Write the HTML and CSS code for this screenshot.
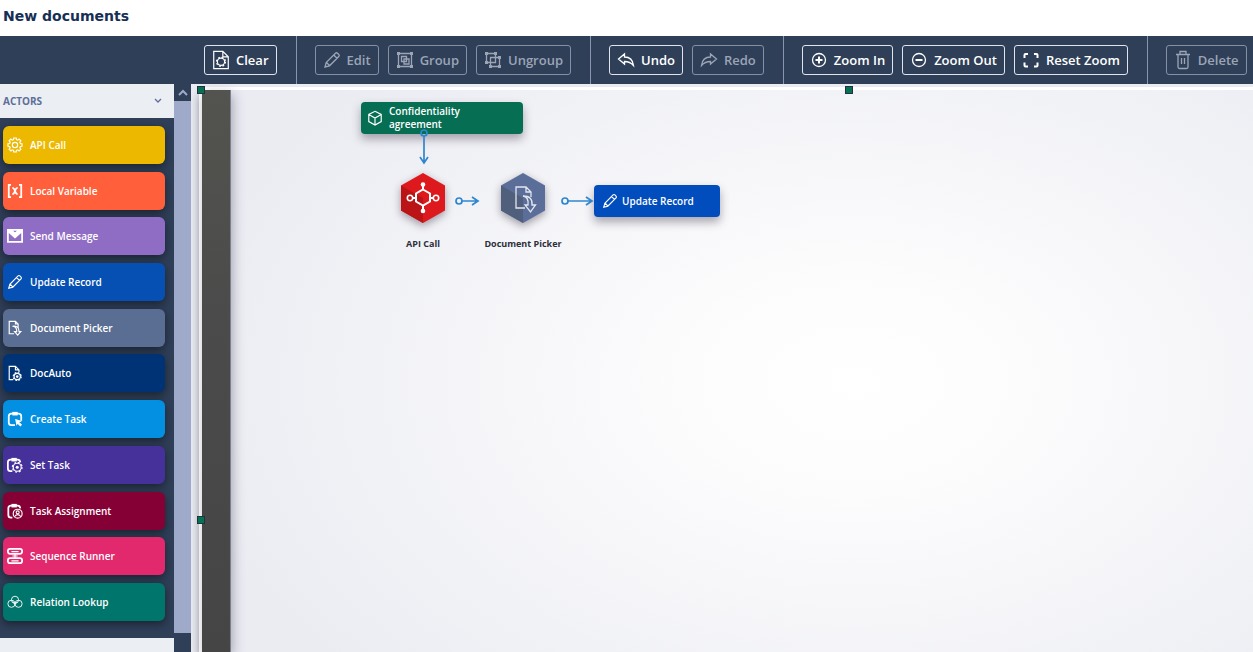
FILE: index.html
```html
<!DOCTYPE html>
<html lang="en">
<head>
    <meta charset="UTF-8">
    <meta name="viewport" content="width=device-width, initial-scale=1.0">
    <title>New documents</title>
    <link rel="stylesheet" href="styles.css">
</head>
<body>
<!-- Icons used more than once -->
<svg class="symbols" aria-hidden="true">
    <symbol id="pencil" viewBox="0 0 18 18">
        <path d="M2 16l1.200-4.500L12.500 2.200q1-1 2 0l1.300 1.300q1 1 0 2L6.500 14.800zM10.800 4l3.200 3.200M3.500 11.500l3 3"/>
    </symbol>
    <symbol id="doc-arrow" viewBox="0 0 18 18">
        <path d="M8 15.500H2.500v-14h7l3 3V9M9.500 1.500v3h3M6 7q5 0 5 6H8.500l3.500 4 3.500-4H13.500Q13.500 6 6 7"/>
    </symbol>
</svg>

<header class="title">
    <h1>New documents</h1>
</header>

<nav class="toolbar">
    <div class="group">
        <button class="tool">
            <svg viewBox="0 0 18 22"><path d="M1 1.500h10l6 6V20.500H1zM11 1.500v6h6"/><circle cx="9" cy="13" r="4"/><circle cx="9" cy="13" r="5" stroke-dasharray="2 1.930"/></svg>
            Clear
        </button>
    </div>
    <div class="group">
        <button class="tool" disabled>
            <svg viewBox="0 0 18 18"><use href="#pencil"/></svg>
            Edit
        </button>
        <button class="tool" disabled>
            <svg viewBox="0 0 18 18"><path d="M2.500 2.500h13v13h-13zM5.500 5.500h5v5h-5zM8 8h5v5H8z"/><path class="dots" d="M1 1h3v3H1zM14 1h3v3h-3zM1 14h3v3H1zM14 14h3v3h-3z"/></svg>
            Group
        </button>
        <button class="tool" disabled>
            <svg viewBox="0 0 18 18"><path d="M2.500 2.500h9v9h-9zM6.500 6.500h9v9h-9z"/><path class="dots" d="M1 1h3v3H1zM10 1h3v3h-3zM1 10h3v3H1zM14 5h3v3h-3zM5 14h3v3H5zM14 14h3v3h-3z"/></svg>
            Ungroup
        </button>
    </div>
    <div class="group">
        <button class="tool">
            <svg viewBox="0 0 18 18"><path d="M1.500 8l6-5v3q8 0 9 8.500Q13 10.500 7.500 10.500V13z"/></svg>
            Undo
        </button>
        <button class="tool" disabled>
            <svg viewBox="0 0 18 18"><path d="M16.500 8l-6-5v3q-8 0-9 8.500Q5 10.500 10.500 10.500V13z"/></svg>
            Redo
        </button>
    </div>
    <div class="group">
        <button class="tool">
            <svg viewBox="0 0 18 18"><circle cx="9" cy="9" r="6.500"/><path class="thick" d="M5.500 9h7M9 5.500v7"/></svg>
            Zoom In
        </button>
        <button class="tool">
            <svg viewBox="0 0 18 18"><circle cx="9" cy="9" r="6.500"/><path class="thick" d="M5.500 9h7"/></svg>
            Zoom Out
        </button>
        <button class="tool">
            <svg viewBox="0 0 18 18"><path class="thick" d="M2.500 7V4q0-1 1-1H6M12 3h2.500q1 0 1 1v3M15.500 11.500v3q0 1-1 1H12M6 15.500H3.500q-1 0-1-1v-3"/></svg>
            Reset Zoom
        </button>
    </div>
    <div class="group">
        <button class="tool" disabled>
            <svg viewBox="0 0 18 20"><path d="M2 4.500h14M6 4.500v-3h6v3M4 4.500V17q0 1.500 1.500 1.500h7q1.500 0 1.500-1.500V4.500M7.500 8v6M10.500 8v6"/></svg>
            Delete
        </button>
    </div>
</nav>

<main class="workspace">
    <aside class="sidebar">
        <button class="section">
            ACTORS
            <svg viewBox="0 0 8 6"><path d="M1 1l3 3 3-3"/></svg>
        </button>
        <div class="actors">
            <button class="actor api">
                <svg viewBox="0 0 18 18"><circle cx="9" cy="9" r="3"/><path d="M15 7.400L16.900 7.600V10.400L15 10.600L14.400 12.100L15.600 13.600L13.600 15.600L12.100 14.400L10.600 15L10.400 16.900H7.600L7.400 15L5.900 14.400L4.400 15.600L2.400 13.600L3.600 12.100L3 10.600L1.100 10.400V7.600L3 7.400L3.600 5.900L2.400 4.400L4.400 2.400L5.900 3.600L7.400 3L7.600 1.100H10.400L10.600 3L12.100 3.600L13.600 2.400L15.600 4.400L14.400 5.900z"/></svg>
                API Call
            </button>
            <button class="actor variable">
                <svg viewBox="0 0 18 18"><path class="thick" d="M4.500 2H2v14h2.500M13.500 2H16v14h-2.500M6 5.500q2 0 3 3.500t3 3.500M12 5.500q-2 0-3 3.500t-3 3.500"/></svg>
                Local Variable
            </button>
            <button class="actor message">
                <svg viewBox="0 0 18 18"><path class="thick" d="M1 2h16v13.500H1z"/><path class="solid" d="M1 2h4l4 4 4-4h4v2l-8 7-8-7z"/></svg>
                Send Message
            </button>
            <button class="actor record">
                <svg viewBox="0 0 18 18"><use href="#pencil"/></svg>
                Update Record
            </button>
            <button class="actor picker">
                <svg viewBox="0 0 18 18"><use href="#doc-arrow"/></svg>
                Document Picker
            </button>
            <button class="actor docauto">
                <svg viewBox="0 0 18 18"><path d="M7 16.500H2.500v-15h7l4 4V8M9.500 1.500v4h4"/><circle cx="11.500" cy="13" r="3.500"/><circle cx="11.500" cy="13" r="4.500" stroke-dasharray="2 1.530"/><circle class="dots" cx="11.500" cy="13" r="1.500"/></svg>
                DocAuto
            </button>
            <button class="actor create">
                <svg viewBox="0 0 18 18"><path class="thick" d="M9 16H5q-3 0-3-3V6q0-3 3-3h8q3 0 3 3v5"/><path class="dots" d="M6 1h6v4H6z"/><path class="solid" d="M10 10l5 1.500-2 1 3 3-1 1-3-3-1 1.500z"/></svg>
                Create Task
            </button>
            <button class="actor set">
                <svg viewBox="0 0 18 18"><path class="thick" d="M6 16H4q-3 0-3-3V6q0-3 3-3h8q2.500 0 3 3"/><path class="dots" d="M5 1h6v4H5z"/><circle cx="11.500" cy="11.500" r="4.500"/><circle cx="11.500" cy="11.500" r="5.500" stroke-dasharray="2.200 2.120"/><circle class="dots" cx="11.500" cy="11.500" r="1.700"/></svg>
                Set Task
            </button>
            <button class="actor assignment">
                <svg viewBox="0 0 18 18"><path class="thick" d="M6 16.500H4.500q-3 0-3-3V6q0-3 3-3H12q2.500 0 3 3"/><path class="dots" d="M5 1h6v4H5z"/><circle cx="12" cy="12" r="5"/><circle cx="12" cy="10.500" r="1.700"/><path d="M8.500 15.500q1-2.500 3.500-2.500t3.500 2.500"/></svg>
                Task Assignment
            </button>
            <button class="actor sequence">
                <svg viewBox="0 0 18 18"><g class="thick"><rect x="1" y="1" width="16" height="5.500" rx="2.500"/><rect x="1" y="11.500" width="16" height="5.500" rx="2.500"/></g><path d="M5 4h8M5 14.500h8M6 9h6M9 6.500v5"/></svg>
                Sequence Runner
            </button>
            <button class="actor relation">
                <svg class="thin" viewBox="0 0 18 18"><circle cx="9" cy="6.500" r="4"/><circle cx="5" cy="11" r="4"/><circle cx="13" cy="11" r="4"/><path d="M6.500 9L9 11.500 11.500 9"/></svg>
                Relation Lookup
            </button>
        </div>
        <div class="next-section"></div>
    </aside>

    <div class="scrollbar">
        <button class="scroll-up" aria-label="Scroll up">
            <svg viewBox="0 0 10 8"><path d="M1 6l4-4 4 4"/></svg>
        </button>
        <div class="thumb"></div>
    </div>

    <section class="canvas">
        <div class="frame">
            <div class="lane"></div>
            <div class="sheet"></div>
        </div>
        <span class="handle corner"></span>
        <span class="handle top"></span>
        <span class="handle left"></span>

        <div class="node start">
            <svg viewBox="0 0 18 18"><path d="M9 1.500l7 3.500v8l-7 4-7-4V5zM2 5l7 4 7-4M9 9v8"/></svg>
            <span>Confidentiality agreement</span>
        </div>
        <div class="node update">
            <svg viewBox="0 0 18 18"><use href="#pencil"/></svg>
            <span>Update Record</span>
        </div>

        <figure class="hex hex-api">
            <svg viewBox="0 0 46 52">
                <path fill="#dd191d" d="M23 1l22 12.500v25L23 51 1 38.500v-25z"/>
                <path fill="#bb1417" d="M1 13.500L23 26v25L1 38.500z"/>
                <g fill="none" stroke="#fff" stroke-width="2">
                    <path d="M23 17.500l7 4v8l-7 4-7-4v-8zM23 17v-4M23 34v4M16 26h-3M30 26h3"/>
                    <circle cx="10" cy="26" r="2.700" stroke-width="1.600"/>
                    <circle cx="36" cy="26" r="2.700" stroke-width="1.600"/>
                </g>
                <circle fill="#fff" cx="23" cy="12.500" r="2.300"/>
                <circle fill="#fff" cx="23" cy="39" r="2.300"/>
            </svg>
            <figcaption>API Call</figcaption>
        </figure>
        <figure class="hex hex-picker">
            <svg viewBox="0 0 46 52">
                <path fill="#5a6e99" d="M23 1l22 12.500v25L23 51 1 38.500v-25z"/>
                <path fill="#50607c" d="M1 13.500L23 26v25L1 38.500z"/>
                <path fill="none" stroke="#e3e6f0" stroke-width="1.300" d="M25 36h-9V15h10l5 5v5M26 15v5h5M23 24q6 1 5 9h-3l5.500 7 5-7H32q1-9-9-9"/>
            </svg>
            <figcaption>Document Picker</figcaption>
        </figure>

        <svg class="links" viewBox="0 0 420 130">
            <circle cx="233" cy="49" r="3"/>
            <path d="M233 52v27M229 73l4 6 4-6"/>
            <circle cx="268" cy="117" r="3"/>
            <path d="M271 117h16M281 113l6 4-6 4"/>
            <circle cx="374" cy="117" r="3"/>
            <path d="M377 117h24M395 113l6 4-6 4"/>
        </svg>
    </section>
</main>
</body>
</html>
```

FILE: styles.css
```css
* {
    box-sizing: border-box;
}
body {
    margin: 0;
    height: 100vh;
    display: flex;
    flex-direction: column;
    overflow: hidden;
    background-color: white;
    font-family: "Open Sans", sans-serif;
}
button {
    font-family: inherit;
    border: none;
    cursor: pointer;
}
svg {
    fill: none;
    stroke: currentColor;
    stroke-width: 1.3;
    flex: none;
}
.symbols {
    position: absolute;
    width: 0;
    height: 0;
}
.dots {
    fill: currentColor;
    stroke: none;
}
.solid {
    fill: currentColor;
}
.thick {
    stroke-width: 2;
}
.thin {
    stroke-width: 1;
}

/* Title */
.title {
    height: 36px;
    padding: 5px 3px;
}
.title h1 {
    margin: 0;
    font-family: "DejaVu Sans", sans-serif;
    font-size: 14px;
    line-height: 22px;
    color: #172f55;
}

/* Toolbar */
.toolbar {
    display: flex;
    height: 48px;
    padding-left: 186px;
    background-color: #2f3f58;
}
.group {
    display: flex;
    align-items: center;
    gap: 9px;
    padding: 0 19px 0 18px;
}
.group + .group {
    border-left: 1px solid #8795b2;
}
.tool {
    display: flex;
    align-items: center;
    gap: 6px;
    height: 30px;
    padding: 0 7px;
    border: 1px solid #dfe4ee;
    border-radius: 3px;
    background: none;
    color: white;
    font-size: 13px;
    font-weight: 600;
    white-space: nowrap;
}
.tool svg {
    width: 18px;
    height: 20px;
}
.tool:disabled {
    border-color: #8490a3;
    color: #9ba5b6;
    cursor: default;
}

/* Sidebar */
.workspace {
    display: flex;
    flex: 1;
    min-height: 0;
}
.sidebar {
    display: flex;
    flex-direction: column;
    width: 174px;
    background-color: #2f3f58;
}
.section {
    display: flex;
    align-items: center;
    justify-content: space-between;
    height: 34px;
    padding: 0 12px 0 3px;
    background-color: #ebeef3;
    color: #5d6e99;
    font-size: 10px;
    font-weight: 700;
}
.section svg {
    width: 8px;
    height: 6px;
}
.actors {
    flex: 1;
    display: flex;
    flex-direction: column;
    justify-content: space-between;
    padding: 8px 9px 17px 3px;
}
.actor {
    display: flex;
    align-items: center;
    gap: 7px;
    height: 38px;
    padding: 0 4px;
    border-radius: 6px;
    box-shadow: 0 3px 8px rgba(0, 0, 0, 0.45);
    color: white;
    font-size: 10px;
    font-weight: 600;
}
.actor svg {
    width: 16px;
    height: 16px;
}
.api { background-color: #edb900; }
.variable { background-color: #ff603b; }
.message { background-color: #906dc5; }
.record { background-color: #064fb3; }
.picker { background-color: #5a6e94; }
.docauto { background-color: #003376; }
.create { background-color: #0390e2; }
.set { background-color: #453199; }
.assignment { background-color: #850035; }
.sequence { background-color: #e2296d; }
.relation { background-color: #00756b; }
.next-section {
    height: 14px;
    background-color: #ebeef3;
}

.scrollbar {
    display: flex;
    flex-direction: column;
    width: 17px;
    padding-bottom: 19px;
    background-color: #2f3f58;
}
.scroll-up {
    height: 17px;
    padding: 0;
    background: none;
    color: #9faacb;
    line-height: 0;
}
.scroll-up svg {
    width: 10px;
    height: 8px;
    stroke-width: 2;
}
.thumb {
    flex: 1;
    background-color: #9faacb;
}

/* Canvas */
.canvas {
    position: relative;
    flex: 1;
    display: flex;
    padding: 3px 0 0 8px;
    overflow: hidden;
    background-color: #ecedf3;
}
.frame {
    flex: 1;
    display: flex;
    border: solid white;
    border-width: 3px 0 0 3px;
    box-shadow: 0 8px 9px rgba(60, 65, 80, 0.4);
}
.lane {
    width: 29px;
    border-right: 1px solid #7b828c;
    background: linear-gradient(#53534f, #4b4b4b 40%, #454545);
    box-shadow: 2px 4px 12px rgba(60, 60, 90, 0.4);
    z-index: 1;
}
.sheet {
    flex: 1;
    background: radial-gradient(ellipse 680px 440px at 61% 52%, white, #fcfcfd 25%, #ebecf2);
}
.handle {
    position: absolute;
    z-index: 2;
    width: 8px;
    height: 8px;
    border: 1px solid #22304a;
    background-color: #04744f;
}
.corner { left: 6px; top: 2px; }
.top { left: 62%; top: 2px; transform: translateX(-50%); }
.left { left: 6px; top: 76%; }

.node {
    position: absolute;
    z-index: 2;
    display: flex;
    align-items: center;
    gap: 6px;
    height: 32px;
    padding: 0 6px;
    border-radius: 4px;
    box-shadow: 0 5px 10px rgba(50, 40, 60, 0.4);
    color: white;
    font-size: 10px;
    font-weight: 600;
    line-height: 13px;
}
.node svg {
    width: 16px;
    height: 16px;
}
.start {
    left: 170px;
    top: 18px;
    width: 162px;
    background-color: #066e53;
}
.start span {
    width: 90px;
}
.update {
    left: 403px;
    top: 101px;
    width: 126px;
    padding: 0 8px;
    gap: 4px;
    background-color: #014dbd;
}
.hex {
    position: absolute;
    z-index: 2;
    top: 88px;
    width: 100px;
    margin: 0;
    text-align: center;
    font-size: 9px;
    font-weight: 700;
    line-height: 14px;
    color: #2d2f3b;
}
.hex svg {
    display: block;
    width: 46px;
    height: 52px;
    margin: 0 auto 13px;
    stroke: none;
    filter: drop-shadow(0 3px 4px rgba(50, 40, 60, 0.45));
}
.hex-api { left: 182px; }
.hex-picker { left: 282px; }
.links {
    position: absolute;
    z-index: 3;
    left: 0;
    top: 0;
    width: 420px;
    height: 130px;
    color: #2f86cf;
    stroke-width: 1.7;
}
```
